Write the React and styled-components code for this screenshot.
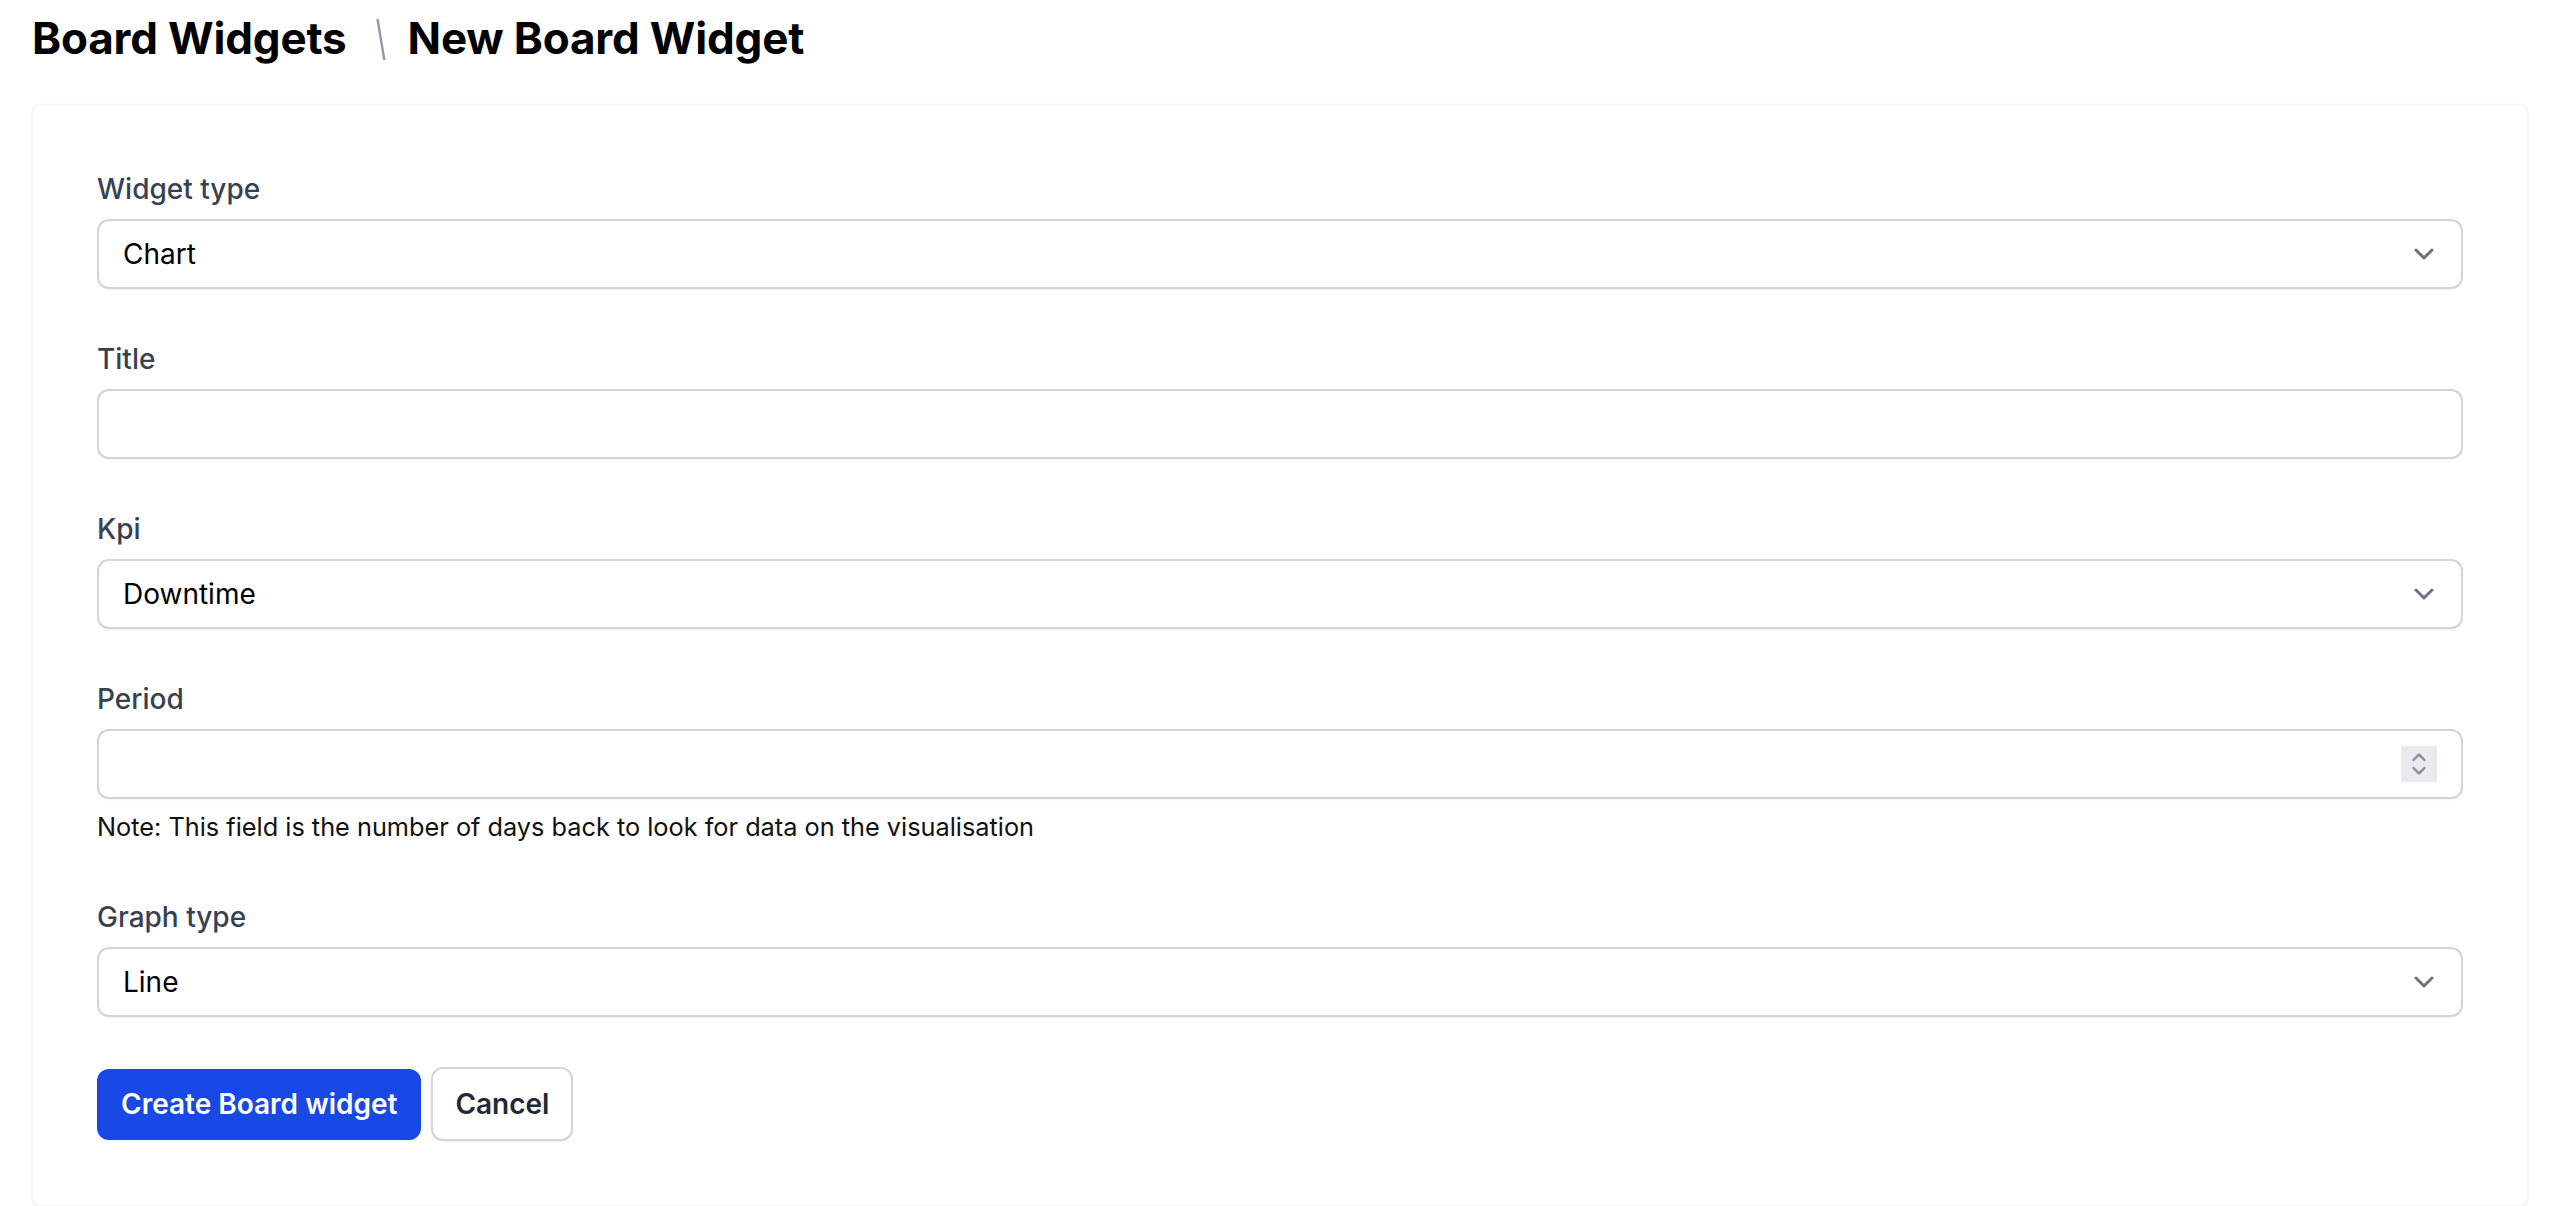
import React from "react";
import styled, { createGlobalStyle } from "styled-components";

const Global = createGlobalStyle`
  html, body { margin: 0; padding: 0; background: #ffffff; }
  body { font-family: Inter, "Noto Sans", "Liberation Sans", sans-serif; color: #111827; }
  * { box-sizing: border-box; }
`;

const Page = styled.div`
  width: 2560px;
  min-height: 1206px;
  background: #ffffff;
`;

const Header = styled.header`
  display: flex;
  align-items: center;
  padding: 16px 32px 44px 32px;
`;

const Crumb = styled.h1`
  margin: 0;
  font-size: 44px;
  line-height: 44px;
  font-weight: 700;
  letter-spacing: -0.004em;
  color: #000000;
`;

const Divider = styled.svg`
  display: block;
  width: 10px;
  height: 44px;
  margin: 0 22px 0 29px;
`;

const Card = styled.main`
  margin: 0 32px;
  padding: 64px;
  background: #ffffff;
  border-radius: 8px;
  border: 1px solid #f4f4f5;
  box-shadow: 0 1px 3px rgba(0, 0, 0, 0.06), 0 1px 2px rgba(0, 0, 0, 0.04);
`;

const Form = styled.form`
  display: flex;
  flex-direction: column;
  gap: 50px;
`;

const Field = styled.div`
  display: flex;
  flex-direction: column;
`;

const Label = styled.label`
  display: block;
  font-size: 28px;
  line-height: 40px;
  font-weight: 500;
  color: #374151;
  margin-bottom: 10px;
`;

const Control = styled.div`
  position: relative;
`;

const baseInput = `
  display: block;
  width: 100%;
  height: 70px;
  padding: 0 24px;
  border: 2px solid #d1d5db;
  border-radius: 12px;
  background: #ffffff;
  box-shadow: 0 1px 2px rgba(0, 0, 0, 0.05);
  font-family: Inter, "Noto Sans", "Liberation Sans", sans-serif;
  font-size: 28px;
  color: #000000;
  outline: none;
  appearance: none;
  -webkit-appearance: none;
  -moz-appearance: textfield;
`;

const Select = styled.select`
  ${baseInput}
`;

const TextInput = styled.input`
  ${baseInput}
  &::-webkit-inner-spin-button,
  &::-webkit-outer-spin-button {
    -webkit-appearance: none;
    margin: 0;
  }
`;

const Chevron = styled.svg`
  position: absolute;
  right: 29px;
  top: 29px;
  width: 20px;
  height: 12px;
  pointer-events: none;
`;

const Spinner = styled.div`
  position: absolute;
  right: 26px;
  top: 17px;
  width: 36px;
  height: 36px;
  background: #e9e9ee;
  display: flex;
  align-items: center;
  justify-content: center;
  pointer-events: none;
`;

const Note = styled.p`
  margin: 8px 0 0;
  font-size: 25.3px;
  line-height: 40px;
  color: #111111;
`;

const Actions = styled.div`
  display: flex;
  align-items: center;
  gap: 10px;
`;

const Button = styled.button`
  height: ${(p) => (p.$primary ? "71px" : "74px")};
  padding: 0 ${(p) => (p.$primary ? "24px" : "22px")};
  border-radius: 12px;
  font-family: Inter, "Noto Sans", "Liberation Sans", sans-serif;
  font-size: 28px;
  font-weight: 600;
  cursor: pointer;
  border: ${(p) => (p.$primary ? "none" : "2px solid #d1d5db")};
  background: ${(p) => (p.$primary ? "#1848e5" : "#ffffff")};
  color: ${(p) => (p.$primary ? "#ffffff" : "#1f2937")};
  box-shadow: 0 1px 2px rgba(0, 0, 0, 0.06);
`;

const ChevronDown = () => (
  <Chevron viewBox="0 0 20 12" fill="none">
    <path d="M2 2 L10 10 L18 2" stroke="#6b7280" strokeWidth="3" strokeLinecap="round" strokeLinejoin="round" />
  </Chevron>
);

const SelectField = ({ label, id, value, options }) => (
  <Field>
    <Label htmlFor={id}>{label}</Label>
    <Control>
      <Select id={id} defaultValue={value}>
        {options.map((o) => (
          <option key={o}>{o}</option>
        ))}
      </Select>
      <ChevronDown />
    </Control>
  </Field>
);

export default function App() {
  return (
    <Page>
      <Global />
      <Header>
        <Crumb>Board Widgets</Crumb>
        <Divider viewBox="0 0 10 44">
          <line x1="1.5" y1="3" x2="8.5" y2="45" stroke="#9199a8" strokeWidth="2.4" />
        </Divider>
        <Crumb>New Board Widget</Crumb>
      </Header>
      <Card>
        <Form onSubmit={(e) => e.preventDefault()}>
          <SelectField id="wt" label="Widget type" value="Chart" options={["Chart", "Number", "Table"]} />
          <Field>
            <Label htmlFor="title">Title</Label>
            <TextInput id="title" type="text" />
          </Field>
          <SelectField id="kpi" label="Kpi" value="Downtime" options={["Downtime", "Uptime", "Throughput"]} />
          <Field>
            <Label htmlFor="period">Period</Label>
            <Control>
              <TextInput id="period" type="number" />
              <Spinner>
                <svg width="18" height="28" viewBox="0 0 18 28" fill="none">
                  <path d="M3.5 10 L9 4.5 L14.5 10" stroke="#8b8b96" strokeWidth="2.4" strokeLinecap="round" strokeLinejoin="round" />
                  <path d="M3.5 18 L9 23.5 L14.5 18" stroke="#8b8b96" strokeWidth="2.4" strokeLinecap="round" strokeLinejoin="round" />
                </svg>
              </Spinner>
            </Control>
            <Note>Note: This field is the number of days back to look for data on the visualisation</Note>
          </Field>
          <SelectField id="gt" label="Graph type" value="Line" options={["Line", "Bar", "Pie"]} />
          <Actions>
            <Button type="submit" $primary>Create Board widget</Button>
            <Button type="button">Cancel</Button>
          </Actions>
        </Form>
      </Card>
    </Page>
  );
}
